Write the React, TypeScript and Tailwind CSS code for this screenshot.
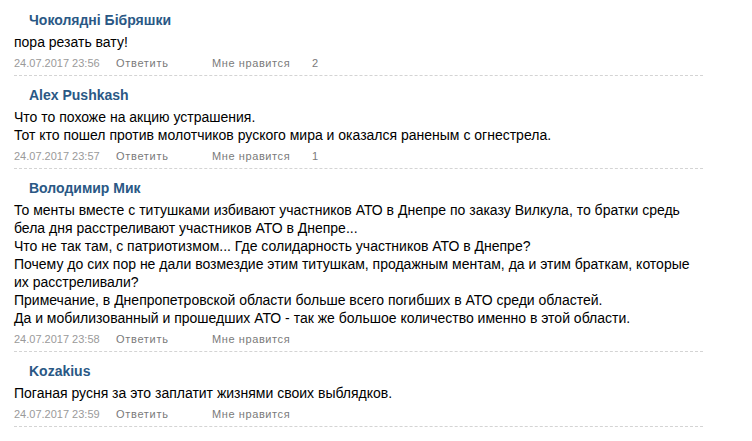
const comments = [
  {
    id: 1,
    author: "Чоколядні Бібряшки",
    lines: ["пора резать вату!"],
    date: "24.07.2017 23:56",
    likes: "2",
  },
  {
    id: 2,
    author: "Alex Pushkash",
    lines: [
      "Что то похоже на акцию устрашения.",
      "Тот кто пошел против молотчиков руского мира и оказался раненым с огнестрела.",
    ],
    date: "24.07.2017 23:57",
    likes: "1",
  },
  {
    id: 3,
    author: "Володимир Мик",
    lines: [
      "То менты вместе с титушками избивают участников АТО в Днепре по заказу Вилкула, то братки средь",
      "бела дня расстреливают участников АТО в Днепре...",
      "Что не так там, с патриотизмом... Где солидарность участников АТО в Днепре?",
      "Почему до сих пор не дали возмездие этим титушкам, продажным ментам, да и этим браткам, которые",
      "их расстреливали?",
      "Примечание, в Днепропетровской области больше всего погибших в АТО среди областей.",
      "Да и мобилизованный и прошедших АТО - так же большое количество именно в этой области.",
    ],
    date: "24.07.2017 23:58",
    likes: "",
  },
  {
    id: 4,
    author: "Kozakius",
    lines: ["Поганая русня за это заплатит жизнями своих выблядков."],
    date: "24.07.2017 23:59",
    likes: "",
  },
];

export default function App() {
  return (
    <div className="min-h-[441px] w-[752px] bg-white pt-px font-['Liberation_Sans',Arial,sans-serif]">
      <div className="ml-[14px] w-[689px]">
        {comments.map((c) => (
          <div key={c.id} className="border-b border-dashed border-[#d4d4d4] pb-[5px] pt-[11px]">
            <div className="pl-[15px] text-[14px] font-bold leading-[16px] text-[#2a5885]">{c.author}</div>
            <div className="mt-[5px] whitespace-nowrap text-[14px] leading-[18px] text-black">
              {c.lines.map((l, i) => (
                <div key={i}>{l}</div>
              ))}
            </div>
            <div className="mt-[5px] flex text-[11px] leading-[14px]">
              <span className="w-[102px] text-[#9a9a9a]">{c.date}</span>
              <span className="w-[96px] tracking-[0.7px] text-[#7a7a7a]">Ответить</span>
              <span className="w-[100px] tracking-[0.6px] text-[#7a7a7a]">Мне нравится</span>
              <span className="text-[#7a7a7a]">{c.likes}</span>
            </div>
          </div>
        ))}
      </div>
    </div>
  );
}
